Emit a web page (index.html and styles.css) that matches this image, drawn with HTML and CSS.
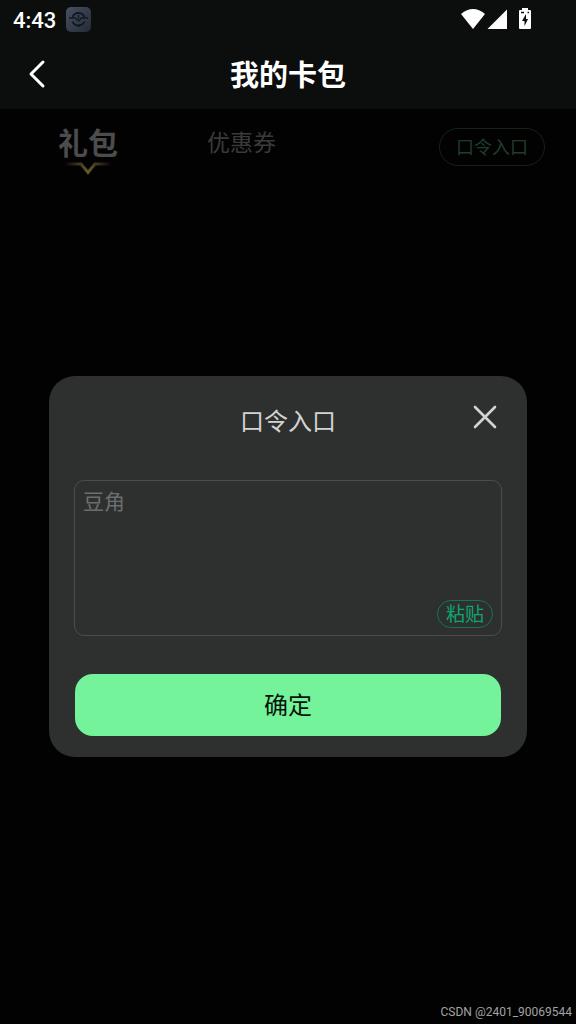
FILE: index.html
```html
<!DOCTYPE html>
<html lang="zh-CN">
<head>
<meta charset="utf-8">
<meta name="viewport" content="width=device-width, initial-scale=1">
<title>我的卡包</title>
<link rel="stylesheet" href="styles.css">
</head>
<body>
<header class="top">
  <div class="status">
    <span class="clock">4:43</span>
    <svg class="app-icon" width="25" height="25" viewBox="0 0 25 25" aria-hidden="true">
      <defs><linearGradient id="tile" x1="0" y1="0" x2="1" y2="1"><stop offset="0" stop-color="#485162"/><stop offset="1" stop-color="#242a36"/></linearGradient></defs>
      <rect width="25" height="25" rx="5" fill="url(#tile)"/>
      <g fill="none" stroke="#121821">
        <path d="M6.500 10A6.500 6.500 0 0 1 18.500 10M6.500 14.500A6.500 6.500 0 0 0 18.500 14.500" stroke-width="1.800"/>
        <path d="M3 11H9.500L12.500 14L15.500 11H22" stroke-width="1.500"/>
        <path d="M12.500 8V11.500" stroke-width="1.500"/>
      </g>
      <path d="M10 17.500H15L12.500 20.500Z" fill="#121821"/>
    </svg>
    <svg class="signals" width="72" height="25" viewBox="0 0 72 25" fill="#fff" aria-hidden="true">
      <path d="M1 7Q13 -3 25 7L13 22Z"/>
      <path d="M27.500 22L47 2.500V22Z"/>
      <path d="M62 1H68V3H70Q71 3 71 4V21Q71 22 70 22H60Q59 22 59 21V4Q59 3 60 3H62Z"/>
      <path d="M61 5.500H64M67.500 5.500H69" stroke="#0b0e0d" stroke-width="1.400"/>
      <path d="M66 7L62 14H64.500V19L68 12H66Z" fill="#0b0e0d"/>
    </svg>
  </div>
  <div class="nav">
    <button class="back" type="button" aria-label="返回">
      <svg width="18" height="30" viewBox="0 0 18 30" aria-hidden="true"><path d="M15 3L3 15L15 27" fill="none" stroke="#fff" stroke-width="3" stroke-linecap="round" stroke-linejoin="round"/></svg>
    </button>
    <h1 class="title">我的卡包</h1>
  </div>
</header>
<main class="page">
  <div class="tabs">
    <button class="tab tab-active" type="button">礼包
      <svg class="marker" width="46" height="14" viewBox="0 0 46 14" aria-hidden="true">
        <defs><linearGradient id="gold" gradientUnits="userSpaceOnUse" x1="0" y1="0" x2="46" y2="0"><stop offset="0" stop-color="#54472b" stop-opacity="0"/><stop offset=".35" stop-color="#473c26"/><stop offset=".5" stop-color="#6b592a"/><stop offset=".65" stop-color="#473c26"/><stop offset="1" stop-color="#54472b" stop-opacity="0"/></linearGradient></defs>
        <path d="M0 2H16L23 10.500L30 2H46" fill="none" stroke="url(#gold)" stroke-width="3"/>
      </svg>
    </button>
    <button class="tab" type="button">优惠券</button>
    <button class="code-entry" type="button">口令入口</button>
  </div>
  <div class="overlay">
    <section class="dialog" role="dialog" aria-labelledby="dialog-title">
      <div class="dialog-head">
        <h2 class="dialog-title" id="dialog-title">口令入口</h2>
        <button class="close" type="button" aria-label="关闭">
          <svg width="24" height="24" viewBox="0 0 24 24" aria-hidden="true"><path d="M2 2L22 22M22 2L2 22" stroke="#d3d3d7" stroke-width="2.600" stroke-linecap="round"/></svg>
        </button>
      </div>
      <div class="field">
        <textarea class="code" aria-label="口令" placeholder="豆角"></textarea>
        <button class="paste" type="button">粘贴</button>
      </div>
      <button class="confirm" type="button">确定</button>
    </section>
  </div>
  <p class="credit">CSDN @2401_90069544</p>
</main>
</body>
</html>
```
FILE: styles.css
```css
* {
  box-sizing: border-box;
}

body {
  margin: 0;
  min-height: 100vh;
  display: flex;
  flex-direction: column;
  background: #020202;
  color: #fff;
  font-family: "Noto Sans CJK SC", sans-serif;
}

button,
textarea {
  margin: 0;
  padding: 0;
  border: 0;
  background: none;
  color: inherit;
  font: inherit;
}

svg {
  display: block;
}

.top {
  background: #0b0e0d;
}

.status {
  display: flex;
  align-items: center;
  height: 39px;
  padding: 0 44px 0 13px;
}

.clock {
  font: 500 22px/40px Roboto, sans-serif;
  padding-top: 2px;
}

.app-icon {
  margin-left: 10px;
}

.signals {
  margin-left: auto;
}

.nav {
  display: grid;
  grid-template-columns: 72px 1fr 72px;
  align-items: center;
  height: 70px;
}

.back {
  padding-left: 28px;
}

.title {
  margin: 0;
  padding-bottom: 2px;
  text-align: center;
  font-size: 29px;
  font-weight: 700;
  line-height: 40px;
}

.page {
  position: relative;
  flex: 1;
  display: flex;
  flex-direction: column;
}

.tabs {
  display: flex;
  align-items: flex-start;
  padding: 11px 31px 0 58px;
}

.tab {
  margin-top: 4px;
  color: #3a3a3a;
  font-size: 23px;
  line-height: 34px;
}

.tab-active {
  margin: 0 89px 0 0;
  color: #4c4c4c;
  font-size: 30px;
  font-weight: 700;
  line-height: 42px;
}

.marker {
  margin: 0 auto;
}

.code-entry {
  margin: 8px 0 0 auto;
  padding: 0 16px 2px;
  border: 1px solid #172019;
  border-radius: 19px;
  color: #203d2a;
  font-size: 18px;
  line-height: 34px;
}

.overlay {
  position: absolute;
  inset: 0;
  display: grid;
  align-items: center;
  padding: 0 49px;
}

.dialog {
  padding: 24px 25px 21px;
  border-radius: 26px;
  background: #2e302f;
}

.dialog-head {
  display: grid;
  grid-template-columns: 32px 1fr 32px;
  align-items: start;
  margin-bottom: 40px;
}

.dialog-title {
  grid-column: 2;
  margin: 0;
  text-align: center;
  color: #d3d3d3;
  font-size: 24px;
  font-weight: 400;
  line-height: 40px;
}

.close {
  padding: 5px 3px;
}

.field {
  display: flex;
  flex-direction: column;
  padding: 4px 8px 7px;
  border: 1px solid #4b4d4c;
  border-radius: 10px;
}

.code {
  width: 100%;
  height: 115px;
  resize: none;
  outline: 0;
  font-size: 21px;
  line-height: 30px;
}

.code::placeholder {
  color: #6c6e6d;
}

.paste {
  align-self: flex-end;
  padding: 0 8px 2px;
  border: 1px solid #147552;
  border-radius: 14px;
  color: #0ca66f;
  font-size: 19px;
  line-height: 24px;
}

.confirm {
  display: block;
  width: calc(100% - 2px);
  margin: 38px auto 0;
  padding-bottom: 2px;
  border-radius: 18px;
  background: #75f39a;
  color: #07140b;
  font-size: 24px;
  line-height: 60px;
}

.credit {
  margin: auto 4px 4px auto;
  color: #a2a2a2;
  font: 12px/16px Roboto, sans-serif;
}
```
